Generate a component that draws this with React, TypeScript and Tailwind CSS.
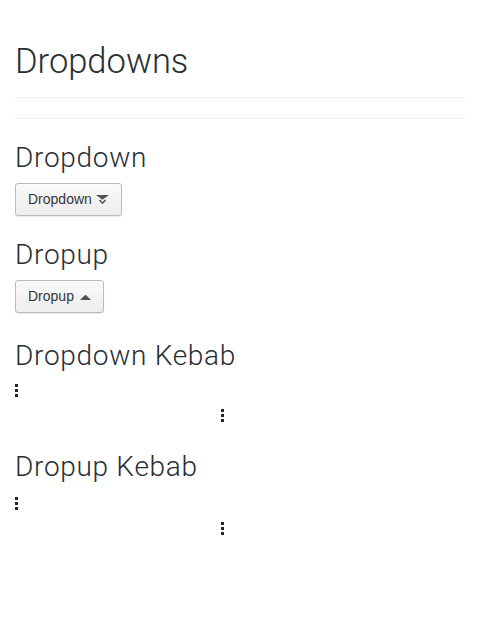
import React from "react";

const heading = { fontFamily: 'Roboto, "Liberation Sans", sans-serif' };

function CaretDown() {
  return (
    <svg width="15" height="11" viewBox="0 0 15 11" className="ml-[3px]">
      <path d="M1 1h13L7.5 5.8z" fill="#4d5258" />
      <path d="M4.5 6 7.5 9.2 10.5 6" fill="none" stroke="#4d5258" strokeWidth="1.5" />
    </svg>
  );
}

function CaretUp() {
  return (
    <svg width="13" height="8" viewBox="0 0 13 8" className="ml-[5px]">
      <path d="M1 7 5.5 2.6Q6.5 1.6 7.5 2.6L12 7z" fill="#4d5258" />
    </svg>
  );
}

function Kebab() {
  return (
    <span className="flex w-[4px] flex-col gap-[2px]">
      <span className="h-[3px] w-[3px] bg-[#252525]" />
      <span className="h-[3px] w-[3px] bg-[#252525]" />
      <span className="h-[3px] w-[3px] bg-[#252525]" />
    </span>
  );
}

function Btn({ label, up }: { label: string; up?: boolean }) {
  return (
    <button
      className="flex h-[33px] items-center rounded-[3px] border border-[#bbbbbb] bg-gradient-to-b from-[#fafafa] to-[#ededed] pl-[12px] pr-[11px] text-[14px] text-[#363636] shadow-[0_1px_1px_rgba(3,3,3,0.08)]"
      style={{ fontFamily: '"Liberation Sans", Arial, sans-serif' }}
    >
      {label}
      {up ? <CaretUp /> : <CaretDown />}
    </button>
  );
}

function KebabPair() {
  return (
    <div className="w-[210px] pt-[11px]">
      <div className="flex">
        <Kebab />
      </div>
      <div className="mt-[12px] flex justify-end">
        <Kebab />
      </div>
    </div>
  );
}

export default function App() {
  return (
    <div className="min-h-screen bg-white px-[15px] text-[#292e34]">
      <h1 className="pt-[40px] text-[34.5px] font-light leading-[42px]" style={heading}>
        Dropdowns
      </h1>
      <div className="mt-[15px] border-t border-[#ededed]" />
      <div className="mt-[20px] border-t border-[#ededed]" />

      <h2 className="mt-[22px] text-[28px] font-light leading-[34px] tracking-[0.7px]" style={heading}>
        Dropdown
      </h2>
      <div className="mt-[8px] flex">
        <Btn label="Dropdown" />
      </div>

      <h2 className="mt-[22px] text-[28px] font-light leading-[34px] tracking-[0.7px]" style={heading}>
        Dropup
      </h2>
      <div className="mt-[8px] flex">
        <Btn label="Dropup" up />
      </div>

      <h2 className="mt-[26px] text-[28px] font-light leading-[34px] tracking-[0.7px]" style={heading}>
        Dropdown Kebab
      </h2>
      <KebabPair />

      <h2 className="mt-[28px] text-[28px] font-light leading-[34px] tracking-[0.7px]" style={heading}>
        Dropup Kebab
      </h2>
      <div className="pt-[2px]">
        <KebabPair />
      </div>
    </div>
  );
}
